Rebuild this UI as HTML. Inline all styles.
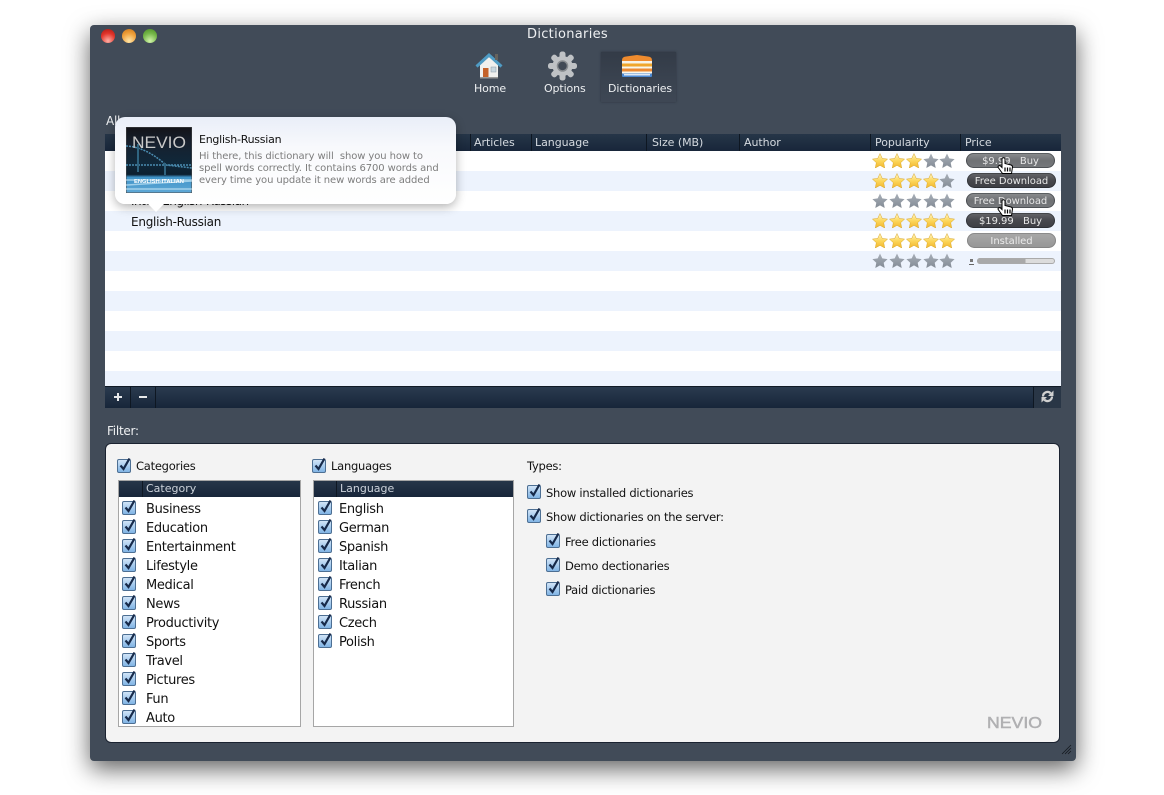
<!DOCTYPE html>
<html><head><meta charset="utf-8">
<style>
html,body{margin:0;padding:0;background:#fff}
body{width:1164px;height:795px;position:relative;overflow:hidden;font-family:"DejaVu Sans","Liberation Sans",sans-serif;font-size:11.5px;color:#111}
div,span,svg{position:absolute}
.t{white-space:nowrap;line-height:16px;letter-spacing:-.25px}
#win{left:90px;top:25px;width:986px;height:736px;background:#414b58;border-radius:4px;box-shadow:0 8px 24px rgba(0,0,0,.62)}
.w{color:#eef0f2}
.tb{font-size:11px;letter-spacing:-.12px;top:81px}
.h{top:134.500px;color:#d5dae0;font-size:11px;letter-spacing:-.05px}
.sep{top:134px;width:1px;height:17px;background:#0e1722}
.row{left:105px;width:956px;height:20px;background:#edf3fd}
.btn{left:967px;width:89px;height:15px;border-radius:8px;color:#e8e8e8;font-size:10px;line-height:17px;text-align:center;letter-spacing:-.05px;box-shadow:inset 0 0 0 1px rgba(20,25,30,.4)}
.d{background:linear-gradient(#66676b,#47484d 50%,#3d3e44)}
.l{background:linear-gradient(#8b8d90,#6f7174 50%,#77797c)}
.i{background:linear-gradient(#a8a8a8,#969696);color:#ececec;box-shadow:inset 0 0 0 1px rgba(120,120,120,.6)}
.lh{height:16px;background:linear-gradient(#263648,#18263a);color:#ccd2da;font-size:11px}
.list{background:#fff;border:1px solid #a6a6a6;top:480px;height:245px}
.c{width:15px;height:16px}
.it{font-size:13px;letter-spacing:-.33px}
</style></head><body>
<svg width="0" height="0" style="left:0;top:0">
<defs>
<linearGradient id="gs" x1="0" y1="0" x2="0" y2="1"><stop offset="0" stop-color="#fff6c8"/><stop offset=".5" stop-color="#fcd75c"/><stop offset="1" stop-color="#f2b62c"/></linearGradient>
<linearGradient id="gg" x1="0" y1="0" x2="0" y2="1"><stop offset="0" stop-color="#a8afb8"/><stop offset="1" stop-color="#838b95"/></linearGradient>
<linearGradient id="gc" x1="0" y1="0" x2="0" y2="1"><stop offset="0" stop-color="#d4e6f8"/><stop offset="1" stop-color="#7db2e4"/></linearGradient>
<symbol id="s" viewBox="0 0 16 15"><path d="M8 .5l2.3 4.9 5.3.7-3.9 3.6 1 5.3L8 12.400l-4.700 2.600 1-5.300L.4 6.100l5.300-.7z" fill="url(#gs)" stroke="#d9a62a" stroke-width=".5"/></symbol>
<symbol id="g" viewBox="0 0 16 15"><path d="M8 .5l2.3 4.900 5.300.7-3.900 3.600 1 5.300L8 12.400l-4.700 2.600 1-5.300L.4 6.100l5.300-.7z" fill="url(#gg)"/></symbol>
<symbol id="k" viewBox="0 0 15 16"><rect x=".5" y="2.500" width="13" height="13" rx="1.500" fill="url(#gc)" stroke="#4d6f93"/><path d="M3.500 8.500l3 3.500L12.500 1.500" fill="none" stroke="#172a4a" stroke-width="2.200"/></symbol>
<symbol id="hand" viewBox="0 0 17 17"><path d="M5 1.500Q6.500 0 8 1.500V6.500L14 8Q15.500 8.500 15.500 10L14.500 16.500H5.500L1.200 10.500C.5 9 2.500 8 3.500 9L5 10.500Z" fill="#fff" stroke="#000"/><path d="M8 10.500V14.500M10.500 10.500V14.500M13 10.500V14.500" stroke="#000" stroke-width="1.200"/></symbol>
</defs></svg>

<div id="win"></div>

<!-- traffic lights -->
<div style="left:101px;top:29px;width:14px;height:14px;border-radius:50%;background:radial-gradient(circle at 50% 85%,#ffb0a6,#e2352b 55%,#a81812)"></div>
<div style="left:122px;top:29px;width:14px;height:14px;border-radius:50%;background:radial-gradient(circle at 50% 85%,#ffe6a8,#f0a13c 55%,#c87418)"></div>
<div style="left:143px;top:29px;width:14px;height:14px;border-radius:50%;background:radial-gradient(circle at 50% 85%,#d2f4aa,#76b84a 55%,#4a8c24)"></div>
<div class="t w" style="left:90px;width:955px;text-align:center;top:27px;font-size:13px;letter-spacing:.3px;line-height:16px">Dictionaries</div>

<!-- toolbar -->
<div style="left:601px;top:52px;width:75px;height:50px;background:linear-gradient(#333b47,#3a4350 60%,#3e4754);box-shadow:0 0 2px rgba(30,35,45,.6)"></div>
<svg style="left:475px;top:52px" width="28" height="28" viewBox="0 0 28 28">
<path d="M5 13L14 5l9 8v13H5z" fill="#f0f0ee"/><path d="M1.500 14.500L14 3l12.500 11.500" fill="none" stroke="#4f9cc5" stroke-width="3"/><rect x="20" y="2" width="3" height="6" fill="#66635e"/><rect x="8" y="16" width="5.500" height="10" fill="#c4622a"/><rect x="16" y="15" width="5" height="5" fill="#c9d7df" stroke="#8a9aa5" stroke-width=".5"/><rect x="5" y="25" width="18" height="1.500" fill="#9a9a98"/>
</svg>
<svg style="left:547px;top:51px" width="31" height="30" viewBox="-15.500 -15 31 30">
<g fill="#bfc2c5"><circle r="10"/><rect x="-3" y="-14.500" width="6" height="29" rx="2.500"/><rect x="-3" y="-14.500" width="6" height="29" rx="2.500" transform="rotate(45)"/><rect x="-3" y="-14.500" width="6" height="29" rx="2.500" transform="rotate(90)"/><rect x="-3" y="-14.500" width="6" height="29" rx="2.500" transform="rotate(135)"/></g>
<circle r="5" fill="#414a56" stroke="#888c90" stroke-width="1.500"/>
</svg>
<svg style="left:620px;top:54px" width="34" height="25" viewBox="0 0 34 25">
<path d="M2 6Q2 3 6 2.500L17 1l11 1.500Q32 3 32 6v1H2z" fill="#ef8b2e"/><rect x="2" y="7" width="30" height="2.500" fill="#f6f3e8"/><rect x="2" y="9.500" width="30" height="3" fill="#f0a62c"/><rect x="2" y="12.500" width="30" height="2" fill="#f8f6ec"/><rect x="2" y="14.500" width="30" height="3" fill="#ed8a32"/><rect x="2" y="17.500" width="30" height="2" fill="#f8f6ec"/><rect x="2" y="19.500" width="30" height="3.500" rx="1" fill="#4a88d2"/><rect x="4" y="20" width="26" height="1.500" fill="#dfe9f6"/>
</svg>
<div class="t w tb" style="left:474px">Home</div>
<div class="t w tb" style="left:544px">Options</div>
<div class="t w tb" style="left:608px">Dictionaries</div>

<div class="t w" style="left:106px;top:113px;font-size:12px">All</div>

<!-- table -->
<div style="left:105px;top:134px;width:956px;height:17px;background:linear-gradient(#263648,#18263a)"></div>
<div class="sep" style="left:470px"></div><div class="sep" style="left:531px"></div><div class="sep" style="left:646px"></div><div class="sep" style="left:739px"></div><div class="sep" style="left:870px"></div><div class="sep" style="left:960px"></div>
<div class="t h" style="left:474px">Articles</div>
<div class="t h" style="left:535px">Language</div>
<div class="t h" style="left:652px">Size (MB)</div>
<div class="t h" style="left:744px">Author</div>
<div class="t h" style="left:875px">Popularity</div>
<div class="t h" style="left:965px">Price</div>

<div style="left:105px;top:151px;width:956px;height:235px;background:#fff"></div>
<div class="row" style="top:171px"></div><div class="row" style="top:211px"></div><div class="row" style="top:251px"></div><div class="row" style="top:291px"></div><div class="row" style="top:331px"></div><div class="row" style="top:371px;height:15px"></div>

<div class="t" style="left:131px;top:193px;font-size:12px;letter-spacing:-.5px">Inter. English-Russian</div>
<div class="t" style="left:131px;top:214px;font-size:12px">English-Russian</div>

<!-- stars -->
<svg style="left:872px;top:153px" width="16" height="15"><use href="#s"/></svg><svg style="left:889px;top:153px" width="16" height="15"><use href="#s"/></svg><svg style="left:906px;top:153px" width="16" height="15"><use href="#s"/></svg><svg style="left:923px;top:153px" width="16" height="15"><use href="#g"/></svg><svg style="left:939px;top:153px" width="16" height="15"><use href="#g"/></svg>
<svg style="left:872px;top:173px" width="16" height="15"><use href="#s"/></svg><svg style="left:889px;top:173px" width="16" height="15"><use href="#s"/></svg><svg style="left:906px;top:173px" width="16" height="15"><use href="#s"/></svg><svg style="left:923px;top:173px" width="16" height="15"><use href="#s"/></svg><svg style="left:939px;top:173px" width="16" height="15"><use href="#g"/></svg>
<svg style="left:872px;top:193px" width="16" height="15"><use href="#g"/></svg><svg style="left:889px;top:193px" width="16" height="15"><use href="#g"/></svg><svg style="left:906px;top:193px" width="16" height="15"><use href="#g"/></svg><svg style="left:923px;top:193px" width="16" height="15"><use href="#g"/></svg><svg style="left:939px;top:193px" width="16" height="15"><use href="#g"/></svg>
<svg style="left:872px;top:213px" width="16" height="15"><use href="#s"/></svg><svg style="left:889px;top:213px" width="16" height="15"><use href="#s"/></svg><svg style="left:906px;top:213px" width="16" height="15"><use href="#s"/></svg><svg style="left:923px;top:213px" width="16" height="15"><use href="#s"/></svg><svg style="left:939px;top:213px" width="16" height="15"><use href="#s"/></svg>
<svg style="left:872px;top:233px" width="16" height="15"><use href="#s"/></svg><svg style="left:889px;top:233px" width="16" height="15"><use href="#s"/></svg><svg style="left:906px;top:233px" width="16" height="15"><use href="#s"/></svg><svg style="left:923px;top:233px" width="16" height="15"><use href="#s"/></svg><svg style="left:939px;top:233px" width="16" height="15"><use href="#s"/></svg>
<svg style="left:872px;top:253px" width="16" height="15"><use href="#g"/></svg><svg style="left:889px;top:253px" width="16" height="15"><use href="#g"/></svg><svg style="left:906px;top:253px" width="16" height="15"><use href="#g"/></svg><svg style="left:923px;top:253px" width="16" height="15"><use href="#g"/></svg><svg style="left:939px;top:253px" width="16" height="15"><use href="#g"/></svg>

<!-- buttons -->
<div class="btn l" style="left:966px;top:153px">$9.99 &nbsp; Buy</div>
<div class="btn d" style="left:967px;top:173px">Free Download</div>
<div class="btn l" style="left:966px;top:193px">Free Download</div>
<div class="btn d" style="left:966px;top:213px">$19.99 &nbsp; Buy</div>
<div class="btn i" style="left:967px;top:233px">Installed</div>
<div style="left:969px;top:258px;width:5px;height:6px;border-bottom:1px solid #666"></div>
<div style="left:970px;top:259px;width:3px;height:3px;background:#777"></div>
<div style="left:977px;top:258px;width:78px;height:6px;border-radius:3px;background:linear-gradient(90deg,#a9a9a9 62%,#dcdcdc 62%);box-shadow:inset 0 0 0 1px #aaa"></div>
<svg style="left:997px;top:157px" width="17" height="17"><use href="#hand"/></svg>
<svg style="left:997px;top:199px" width="17" height="17"><use href="#hand"/></svg>

<!-- table footer -->
<div style="left:105px;top:386px;width:956px;height:22px;background:linear-gradient(#2b3c50,#17263a);box-shadow:inset 0 1px 0 #111a26"></div>
<div style="left:130px;top:387px;width:1px;height:21px;background:#0e1722"></div>
<div style="left:155px;top:387px;width:1px;height:21px;background:#0e1722"></div>
<div style="left:1033px;top:387px;width:1px;height:21px;background:#0e1722"></div>
<div style="left:1034px;top:387px;width:27px;height:21px;background:#293646"></div>
<div style="left:114px;top:396px;width:8px;height:2px;background:#e6e8ea"></div><div style="left:117px;top:393px;width:2px;height:8px;background:#e6e8ea"></div>
<div style="left:139px;top:396px;width:8px;height:2px;background:#e6e8ea"></div>
<svg style="left:1040px;top:390px" width="15" height="13" viewBox="0 0 15 13"><path d="M3 6.500A4.500 4.500 0 0 1 10.700 3.300M12 6.500A4.500 4.500 0 0 1 4.300 9.700" fill="none" stroke="#d0d0d0" stroke-width="2.200"/><path d="M13.500 .5V6H8zM1.500 12.500V7H7z" fill="#d0d0d0"/></svg>

<div class="t w" style="left:107px;top:423px;font-size:12px">Filter:</div>

<!-- filter panel -->
<div style="left:105px;top:443px;width:955px;height:300px;box-sizing:border-box;background:#f3f3f3;border:1px solid #1a2230;border-radius:6px"></div>
<svg class="c" style="left:117px;top:457px"><use href="#k"/></svg>
<div class="t" style="left:136px;top:458px">Categories</div>
<svg class="c" style="left:312px;top:457px"><use href="#k"/></svg>
<div class="t" style="left:331px;top:458px">Languages</div>
<div class="t" style="left:527px;top:458px">Types:</div>

<div class="list" style="left:118px;width:181px"></div>
<div class="lh" style="left:119px;top:481px;width:181px"></div>
<div style="left:142px;top:481px;width:1px;height:16px;background:#0e1722"></div>
<div class="t" style="left:146px;top:481px;font-size:11px;color:#ccd2da;letter-spacing:0">Category</div>

<div class="list" style="left:313px;width:199px"></div>
<div class="lh" style="left:314px;top:481px;width:199px"></div>
<div style="left:336px;top:481px;width:1px;height:16px;background:#0e1722"></div>
<div class="t" style="left:340px;top:481px;font-size:11px;color:#ccd2da;letter-spacing:0">Language</div>

<svg class="c" style="left:122px;top:499px"><use href="#k"/></svg><div class="t it" style="left:146px;top:502px">Business</div>
<svg class="c" style="left:122px;top:518px"><use href="#k"/></svg><div class="t it" style="left:146px;top:521px">Education</div>
<svg class="c" style="left:122px;top:537px"><use href="#k"/></svg><div class="t it" style="left:146px;top:540px">Entertainment</div>
<svg class="c" style="left:122px;top:556px"><use href="#k"/></svg><div class="t it" style="left:146px;top:559px">Lifestyle</div>
<svg class="c" style="left:122px;top:575px"><use href="#k"/></svg><div class="t it" style="left:146px;top:578px">Medical</div>
<svg class="c" style="left:122px;top:594px"><use href="#k"/></svg><div class="t it" style="left:146px;top:597px">News</div>
<svg class="c" style="left:122px;top:613px"><use href="#k"/></svg><div class="t it" style="left:146px;top:616px">Productivity</div>
<svg class="c" style="left:122px;top:632px"><use href="#k"/></svg><div class="t it" style="left:146px;top:635px">Sports</div>
<svg class="c" style="left:122px;top:651px"><use href="#k"/></svg><div class="t it" style="left:146px;top:654px">Travel</div>
<svg class="c" style="left:122px;top:670px"><use href="#k"/></svg><div class="t it" style="left:146px;top:673px">Pictures</div>
<svg class="c" style="left:122px;top:689px"><use href="#k"/></svg><div class="t it" style="left:146px;top:692px">Fun</div>
<svg class="c" style="left:122px;top:708px"><use href="#k"/></svg><div class="t it" style="left:146px;top:711px">Auto</div>

<svg class="c" style="left:318px;top:499px"><use href="#k"/></svg><div class="t it" style="left:339px;top:502px">English</div>
<svg class="c" style="left:318px;top:518px"><use href="#k"/></svg><div class="t it" style="left:339px;top:521px">German</div>
<svg class="c" style="left:318px;top:537px"><use href="#k"/></svg><div class="t it" style="left:339px;top:540px">Spanish</div>
<svg class="c" style="left:318px;top:556px"><use href="#k"/></svg><div class="t it" style="left:339px;top:559px">Italian</div>
<svg class="c" style="left:318px;top:575px"><use href="#k"/></svg><div class="t it" style="left:339px;top:578px">French</div>
<svg class="c" style="left:318px;top:594px"><use href="#k"/></svg><div class="t it" style="left:339px;top:597px">Russian</div>
<svg class="c" style="left:318px;top:613px"><use href="#k"/></svg><div class="t it" style="left:339px;top:616px">Czech</div>
<svg class="c" style="left:318px;top:632px"><use href="#k"/></svg><div class="t it" style="left:339px;top:635px">Polish</div>

<svg class="c" style="left:527px;top:483px"><use href="#k"/></svg><div class="t" style="left:546px;top:485px">Show installed dictionaries</div>
<svg class="c" style="left:527px;top:507px"><use href="#k"/></svg><div class="t" style="left:546px;top:509px">Show dictionaries on the server:</div>
<svg class="c" style="left:546px;top:532px"><use href="#k"/></svg><div class="t" style="left:565px;top:534px">Free dictionaries</div>
<svg class="c" style="left:546px;top:556px"><use href="#k"/></svg><div class="t" style="left:565px;top:558px">Demo dectionaries</div>
<svg class="c" style="left:546px;top:580px"><use href="#k"/></svg><div class="t" style="left:565px;top:582px">Paid dictionaries</div>

<svg style="left:985px;top:713px" width="60" height="20"><text x="2" y="15" font-family="Liberation Sans" font-size="16" fill="#b0b0b2" stroke="#b0b0b2" stroke-width=".5" textLength="55" lengthAdjust="spacingAndGlyphs">NEVIO</text></svg>
<svg style="left:1060px;top:743px" width="12" height="12" viewBox="0 0 12 12"><path d="M2 11L11 2M5 11l6-6M8 11l3-3" stroke="#15191f" stroke-width=".8"/></svg>

<!-- popup -->
<div style="left:115px;top:117px;width:341px;height:87px;border-radius:10px;background:linear-gradient(#e9eef8,#f8f9fc 35%,#fff);box-shadow:0 3px 10px rgba(0,0,0,.3)"></div>
<svg style="left:147px;top:203px" width="18" height="10"><path d="M0 0h18L9 9z" fill="#fff"/></svg>
<svg style="left:126px;top:127px" width="66" height="66" viewBox="0 0 66 66">
<defs><linearGradient id="th" x1="0" y1="0" x2="0" y2="1"><stop offset="0" stop-color="#131318"/><stop offset=".25" stop-color="#16202e"/><stop offset=".55" stop-color="#10283a"/><stop offset=".72" stop-color="#0c2030"/><stop offset=".76" stop-color="#3f93c8"/><stop offset="1" stop-color="#5fa8d6"/></linearGradient></defs>
<rect width="66" height="66" fill="url(#th)" stroke="#4a4a4a"/>
<path d="M0 19Q20 20 40 38L66 41M0 38H66" stroke="#4a8cb0" stroke-width="1.500" fill="none" stroke-dasharray="2 1"/>
<path d="M12 17V45M39 36V48" stroke="#2f6480" stroke-width="2"/>
<path d="M0 53H66M0 58L66 54M0 62H66" stroke="#c3e6f6" stroke-width="1.500" opacity=".7"/>
<text x="6" y="21" font-family="Liberation Sans" font-size="17" fill="#c9c9c9" textLength="54" lengthAdjust="spacingAndGlyphs">NEVIO</text>
<text x="8" y="56" font-family="Liberation Sans" font-size="5" font-weight="bold" fill="#fff" textLength="50" lengthAdjust="spacingAndGlyphs">ENGLISH-ITALIAN</text>
</svg>
<div class="t" style="left:199px;top:132px;font-size:11px;letter-spacing:-.25px">English-Russian</div>
<div class="t" style="left:199px;top:151px;font-size:10px;line-height:12px;color:#7d7d7d;letter-spacing:-.09px">Hi there, this dictionary will &nbsp;show you how to<br>spell words correctly. It contains 6700 words and<br>every time you update it new words are added</div>
</body></html>
